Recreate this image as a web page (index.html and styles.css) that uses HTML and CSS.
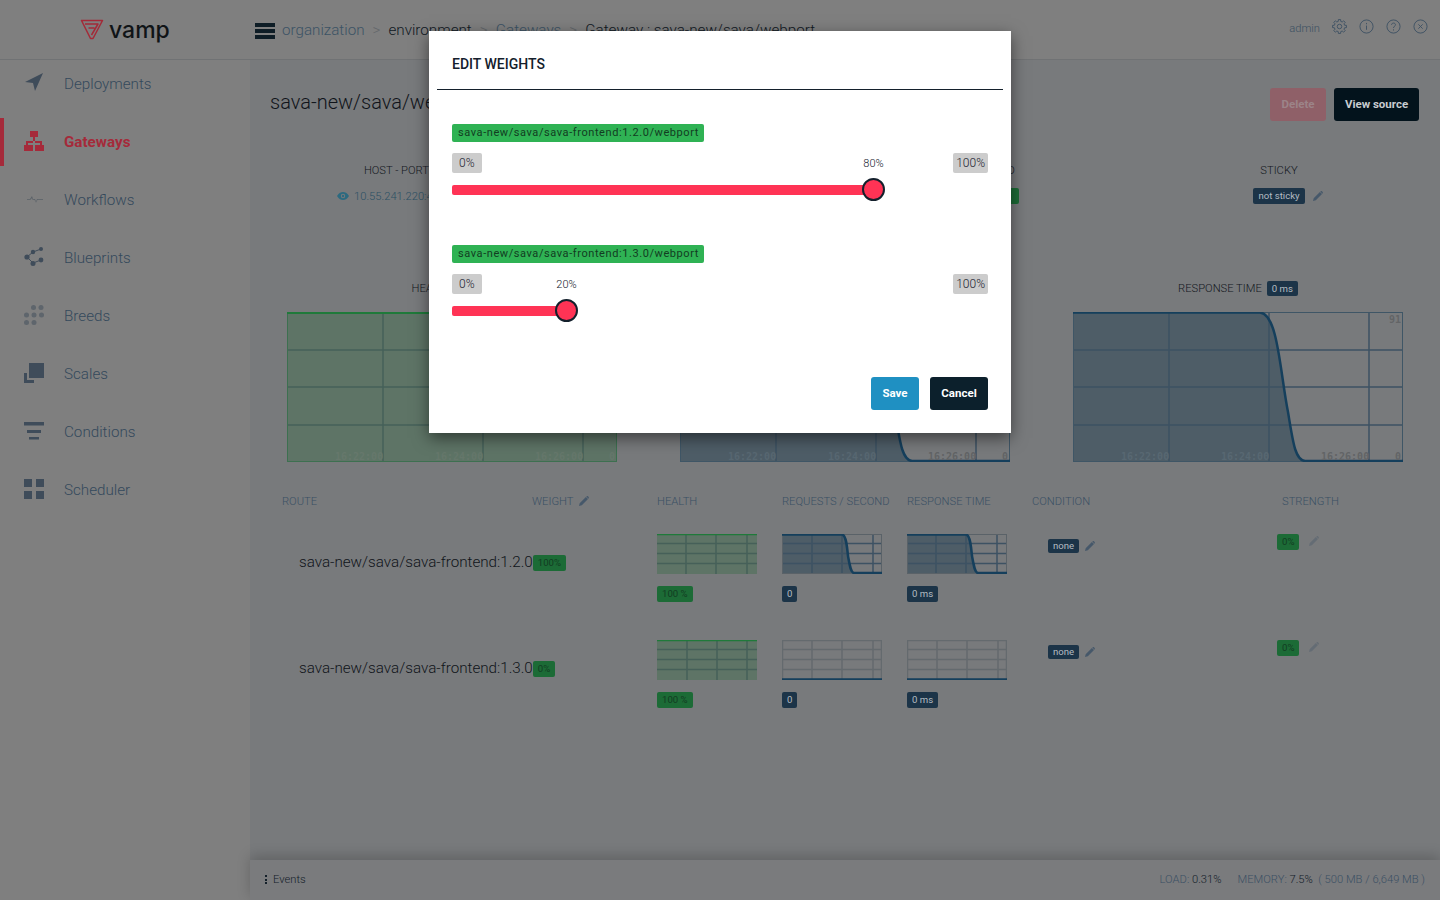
FILE: index.html
```html
<!DOCTYPE html>
<html lang="en">
<head>
  <meta charset="UTF-8" />
  <title>Vamp - Gateway</title>
  <link rel="stylesheet" href="styles.css">
</head>
<body>

<svg class="defs" width="0" height="0">
  <symbol id="pencil" viewBox="0 0 10 10">
    <path d="M0 10 L.7 7.2 L6.9 1 L9 3.1 L2.8 9.3 Z M7.5.4 C8 0 8.5 0 8.9.3 L9.7 1.1 C10 1.5 10 2 9.6 2.5 L9.4 2.7 L7.3.6 Z" />
  </symbol>
</svg>

<header class="topbar">
  <div class="logo">
    <svg width="24" height="21" viewBox="0 0 24 21" fill="none" stroke="#a32a38" stroke-width="1.5" stroke-linejoin="round">
      <path d="M1.5 1.5 L22.5 1.5 L13 19.5 L10.5 19.5 Z" />
      <path d="M5 5 L18 5 L11.5 16 M8.5 9 L14.5 9" />
    </svg>
    <span class="logo-text">vamp</span>
  </div>
  <div class="burger"><span></span><span></span><span></span></div>
  <nav class="crumbs">
    <span>organization</span><i>&gt;</i>
    <span class="crumb-dark">environment</span><i>&gt;</i>
    <span>Gateways</span><i>&gt;</i>
    <span class="crumb-dark">Gateway : sava-new/sava/webport</span>
  </nav>
  <div class="top-right">
    <span class="admin">admin</span>
    <svg class="top-icon" viewBox="0 0 16 16"><circle cx="8" cy="8" r="2.4" /><polygon points="13.43,6.65 15.41,6.83 15.41,9.17 13.43,9.35 12.8,10.88 14.07,12.41 12.41,14.07 10.88,12.8 9.35,13.43 9.17,15.41 6.83,15.41 6.65,13.43 5.12,12.8 3.59,14.07 1.93,12.41 3.2,10.88 2.57,9.35 .59,9.17 .59,6.83 2.57,6.65 3.2,5.12 1.93,3.59 3.59,1.93 5.12,3.2 6.65,2.57 6.83,.59 9.17,.59 9.35,2.57 10.88,3.2 12.41,1.93 14.07,3.59 12.8,5.12" /></svg>
    <svg class="top-icon" viewBox="0 0 16 16"><circle cx="8" cy="8" r="7" /><path d="M8 7v4.5M8 4.2v1.4" /></svg>
    <svg class="top-icon" viewBox="0 0 16 16"><circle cx="8" cy="8" r="7" /><path d="M5.9 6.2C6 3.6 10.2 3.8 10.1 6.2 10 7.8 8 7.8 8 9.6M8 11v1.3" /></svg>
    <svg class="top-icon" viewBox="0 0 16 16"><circle cx="8" cy="8" r="7" /><path d="M5.7 5.7l4.6 4.6M10.3 5.7l-4.6 4.6" /></svg>
  </div>
</header>

<div class="layout">
  <aside class="sidebar">
    <a class="nav-item">
      <svg class="nav-icon" viewBox="0 0 20 20"><path d="M1 9 L19 0 L11 18 L9 10 Z" /></svg>
      Deployments
    </a>
    <a class="nav-item active">
      <svg class="nav-icon" viewBox="0 0 20 20"><path d="M6 0h8v6h-3v4h7v4h2v6h-9v-6h5v-2h-5v-2h-2v2H4v2h5v6H0v-6h2v-4h7V6H6z" /></svg>
      Gateways
    </a>
    <a class="nav-item">
      <svg class="nav-icon faint" viewBox="0 0 20 20"><path d="M3 10h3l2-3 1 3h2l1 3 1-3h6v.7h-5.500l-1.500 3-1.500-3H8.500L8 9l-1.500 1.700H3z" /></svg>
      Workflows
    </a>
    <a class="nav-item">
      <svg class="nav-icon" viewBox="0 0 20 20"><path d="M3 10L9 5l8-3M3 10l6 6M17 13l-8 3" fill="none" stroke="#3f4c5a" /><circle cx="3" cy="10" r="2.600" /><circle cx="9" cy="5" r="2.200" /><circle cx="17" cy="2" r="2" /><circle cx="17" cy="13" r="2.400" /><circle cx="9" cy="16.500" r="2.500" /></svg>
      Blueprints
    </a>
    <a class="nav-item">
      <svg class="nav-icon dots" viewBox="0 0 20 20"><circle cx="9.500" cy="2.500" r="2.500" /><circle cx="17" cy="2.500" r="2.500" /><circle cx="2.500" cy="10" r="2.500" /><circle cx="10" cy="10" r="2.500" /><circle cx="17.500" cy="10" r="2.500" /><circle cx="2.500" cy="17.500" r="2.500" /><circle cx="10" cy="17.500" r="2.500" /></svg>
      Breeds
    </a>
    <a class="nav-item">
      <svg class="nav-icon" viewBox="0 0 20 20"><path d="M5 0h15v15H5z" /><path d="M0 10h3v7h7v3H0z" /></svg>
      Scales
    </a>
    <a class="nav-item">
      <svg class="nav-icon" viewBox="0 0 20 20"><path d="M0 1h20v3.500H0zM3 9h14v3H3zM5 16h10v2.500H5z" /></svg>
      Conditions
    </a>
    <a class="nav-item">
      <svg class="nav-icon" viewBox="0 0 20 20"><path d="M0 0h8v8H0zM12 0h8v8h-8zM0 12h8v8H0zM12 12h8v8h-8z" /></svg>
      Scheduler
    </a>
  </aside>

  <div class="content">
    <main class="main">
      <div class="toolbar">
        <h2 class="page-title">sava-new/sava/webport</h2>
        <div class="toolbar-btns">
          <button class="btn btn-delete">Delete</button>
          <button class="btn btn-dark">View source</button>
        </div>
      </div>

      <div class="stats">
        <div class="stat">
          <div class="stat-label">HOST - PORT/TYPE</div>
          <div class="stat-value host">
            <svg class="eye" viewBox="0 0 12 8"><path d="M0 4C2 .8 4 0 6 0s4 .8 6 4c-2 3.200-4 4-6 4S2 7.200 0 4z" /><circle cx="6" cy="4" r="2.200" fill="#787a7c" /><circle cx="6" cy="4" r="1.200" /></svg>
            10.55.241.220:40000 / http
          </div>
        </div>
        <div class="stat">
          <div class="stat-label">SERVICE</div>
        </div>
        <div class="stat">
          <div class="stat-label">DEPLOYED</div>
          <div class="stat-value"><span class="badge badge-green badge-wide">yes</span></div>
        </div>
        <div class="stat">
          <div class="stat-label">STICKY</div>
          <div class="stat-value">
            <span class="badge badge-navy">not sticky</span>
            <svg class="pencil pencil-hang"><use href="#pencil" /></svg>
          </div>
        </div>
      </div>

      <div class="charts">
        <div class="chart-box">
          <div class="chart-head">HEALTH <span class="badge badge-green">100 %</span></div>
          <svg class="chart" width="330" height="150" viewBox="0 0 330 150">
            <rect width="330" height="150" fill="#5e7466" />
            <path class="grid-green" d="M96 0v150M196 0v150M296 0v150M0 38h330M0 75h330M0 113h330" />
            <rect x=".5" y=".5" width="329" height="149" fill="none" stroke="#3d7050" />
            <path d="M0 1h330" stroke="#1f7a3a" stroke-width="2" />
            <text class="tick tick-fill" x="48" y="148">16:22:00</text>
            <text class="tick tick-fill" x="148" y="148">16:24:00</text>
            <text class="tick tick-fill" x="248" y="148">16:26:00</text>
            <text class="tick tick-fill" x="322" y="148">0</text>
          </svg>
        </div>
        <div class="chart-box">
          <div class="chart-head">REQUESTS / SECOND <span class="badge badge-navy">0</span></div>
          <svg class="chart" width="330" height="150" viewBox="0 0 330 150">
            <path class="area-blue" d="M0 .5H187C205 2 207 60 215 100 220 130 222 148 232 149.500H0Z" />
            <path class="grid-blue" d="M96 0v150M196 0v150M296 0v150M0 38h330M0 75h330M0 113h330" />
            <rect x=".5" y=".5" width="329" height="149" fill="none" stroke="#3f5666" />
            <path class="curve" d="M0 .5H187C205 2 207 60 215 100 220 130 222 148 232 149H330" />
            <text class="tick tick-blue" x="48" y="148">16:22:00</text>
            <text class="tick tick-blue" x="148" y="148">16:24:00</text>
            <text class="tick" x="248" y="148">16:26:00</text>
            <text class="tick" x="322" y="148">0</text>
          </svg>
        </div>
        <div class="chart-box">
          <div class="chart-head">RESPONSE TIME <span class="badge badge-navy">0 ms</span></div>
          <svg class="chart" width="330" height="150" viewBox="0 0 330 150">
            <path class="area-blue" d="M0 .5H187C205 2 207 60 215 100 220 130 222 148 232 149.500H0Z" />
            <path class="grid-blue" d="M96 0v150M196 0v150M296 0v150M0 38h330M0 75h330M0 113h330" />
            <rect x=".5" y=".5" width="329" height="149" fill="none" stroke="#3f5666" />
            <path class="curve" d="M0 .5H187C205 2 207 60 215 100 220 130 222 148 232 149H330" />
            <text class="tick" x="316" y="11">91</text>
            <text class="tick tick-blue" x="48" y="148">16:22:00</text>
            <text class="tick tick-blue" x="148" y="148">16:24:00</text>
            <text class="tick" x="248" y="148">16:26:00</text>
            <text class="tick" x="322" y="148">0</text>
          </svg>
        </div>
      </div>

      <div class="routes">
        <div class="route-grid route-head">
          <div>ROUTE</div>
          <div>WEIGHT <svg class="pencil"><use href="#pencil" /></svg></div>
          <div>HEALTH</div>
          <div>REQUESTS / SECOND</div>
          <div>RESPONSE TIME</div>
          <div>CONDITION</div>
          <div>STRENGTH</div>
        </div>

        <div class="route-grid route-row">
          <div class="route-name"><span>sava-new/sava/sava-frontend:1.2.0</span><span class="badge badge-green">100%</span></div>
          <div class="mini">
            <svg width="100" height="40" viewBox="0 0 100 40">
              <rect width="100" height="40" fill="#5e7466" />
              <path class="grid-green" d="M29 0v40M59 0v40M90 0v40M0 9.500h100M0 19.500h100M0 29.500h100" />
              <path d="M0 .5h100" stroke="#1f7a3a" stroke-width="1.500" />
            </svg>
            <span class="badge badge-green">100 %</span>
          </div>
          <div class="mini">
            <svg width="100" height="40" viewBox="0 0 100 40">
              <path class="area-blue" d="M0 .5H60C64 1 65 12 66 22 68 33 69 39 72 39.500H0Z" />
              <path class="grid-blue" d="M30 0v40M60 0v40M91 0v40M0 9.500h100M0 19.500h100M0 29.500h100" />
              <rect x=".5" y=".5" width="99" height="39" fill="none" stroke="#5a6268" />
              <path class="curve" d="M0 .5H60C64 1 65 12 66 22 68 33 69 39 72 39H100" />
            </svg>
            <span class="badge badge-navy">0</span>
          </div>
          <div class="mini">
            <svg width="100" height="40" viewBox="0 0 100 40">
              <path class="area-blue" d="M0 .5H59C63 1 64 12 65 22 67 33 68 39 71 39.500H0Z" />
              <path class="grid-blue" d="M29 0v40M59 0v40M90 0v40M0 9.500h100M0 19.500h100M0 29.500h100" />
              <rect x=".5" y=".5" width="99" height="39" fill="none" stroke="#5a6268" />
              <path class="curve" d="M0 .5H59C63 1 64 12 65 22 67 33 68 39 71 39H100" />
            </svg>
            <span class="badge badge-navy">0 ms</span>
          </div>
          <div class="condition"><span class="badge badge-navy badge-small">none</span><svg class="pencil"><use href="#pencil" /></svg></div>
          <div class="strength"><span class="badge badge-green">0%</span><svg class="pencil pencil-faint"><use href="#pencil" /></svg></div>
        </div>

        <div class="route-grid route-row">
          <div class="route-name"><span>sava-new/sava/sava-frontend:1.3.0</span><span class="badge badge-green">0%</span></div>
          <div class="mini">
            <svg width="100" height="40" viewBox="0 0 100 40">
              <rect width="100" height="40" fill="#5e7466" />
              <path class="grid-green" d="M30 0v40M60 0v40M90 0v40M0 9.500h100M0 19.500h100M0 29.500h100" />
              <path d="M0 .5h100" stroke="#1f7a3a" stroke-width="1.500" />
            </svg>
            <span class="badge badge-green">100 %</span>
          </div>
          <div class="mini">
            <svg width="100" height="40" viewBox="0 0 100 40">
              <path class="grid-gray" d="M.5 0v40M30 0v40M60 0v40M91 0v40M99.500 0v40M0 .5h100M0 9.500h100M0 19.500h100M0 29.500h100" />
              <path class="curve" d="M0 39.500H100" />
            </svg>
            <span class="badge badge-navy">0</span>
          </div>
          <div class="mini">
            <svg width="100" height="40" viewBox="0 0 100 40">
              <path class="grid-gray" d="M.5 0v40M30 0v40M60 0v40M91 0v40M99.500 0v40M0 .5h100M0 9.500h100M0 19.500h100M0 29.500h100" />
              <path class="curve" d="M0 39.500H100" />
            </svg>
            <span class="badge badge-navy">0 ms</span>
          </div>
          <div class="condition"><span class="badge badge-navy badge-small">none</span><svg class="pencil"><use href="#pencil" /></svg></div>
          <div class="strength"><span class="badge badge-green">0%</span><svg class="pencil pencil-faint"><use href="#pencil" /></svg></div>
        </div>
      </div>
    </main>

    <footer class="statusbar">
      <div class="events"><span class="kebab"></span>Events</div>
      <div class="usage">
        <span>LOAD: <b>0.31%</b></span>
        <span>MEMORY: <b>7.5%</b> &nbsp;( 500 MB / 6,649 MB )</span>
      </div>
    </footer>
  </div>
</div>

<div class="modal">
  <div class="modal-title">EDIT WEIGHTS</div>
  <div class="modal-body">
    <div class="weight">
      <span class="route-tag">sava-new/sava/sava-frontend:1.2.0/webport</span>
      <div class="scale"><span>0%</span><span>100%</span></div>
      <div class="track" style="width: 422px">
        <span class="thumb-label">80%</span>
        <span class="thumb"></span>
      </div>
    </div>
    <div class="weight">
      <span class="route-tag">sava-new/sava/sava-frontend:1.3.0/webport</span>
      <div class="scale"><span>0%</span><span>100%</span></div>
      <div class="track" style="width: 115px">
        <span class="thumb-label">20%</span>
        <span class="thumb"></span>
      </div>
    </div>
    <div class="modal-btns">
      <button class="btn btn-save">Save</button>
      <button class="btn btn-cancel">Cancel</button>
    </div>
  </div>
</div>

</body>
</html>
```

FILE: styles.css
```css
* {
  box-sizing: border-box;
}
html, body {
  margin: 0;
  height: 900px;
  overflow: hidden;
}
body {
  font-family: Roboto, "Liberation Sans", sans-serif;
  font-weight: 300;
  background: #7f7f7f;
  color: #1c2630;
  position: relative;
}
.defs {
  position: absolute;
}

/* top bar */
.topbar {
  display: flex;
  align-items: center;
  height: 60px;
  border-bottom: 1px solid #707274;
}
.logo {
  width: 255px;
  flex: none;
  display: flex;
  align-items: center;
  padding-left: 80px;
  gap: 5px;
}
.logo-text {
  font-family: Inter, sans-serif;
  font-size: 23px;
  font-weight: 500;
  color: #101417;
  line-height: 24px;
}
.burger {
  width: 20px;
  display: flex;
  flex-direction: column;
  gap: 2px;
  flex: none;
  margin-top: 2px;
}
.burger span {
  height: 4px;
  background: #0e1d26;
}
.crumbs {
  display: flex;
  align-items: center;
  margin-left: 7px;
  font-size: 15.2px;
  color: #3c5365;
  white-space: nowrap;
}
.crumbs i {
  font-style: normal;
  margin: 0 8px 0 8px;
  color: #62666a;
}
.crumb-dark {
  color: #10181f;
}
.top-right {
  margin-left: auto;
  display: flex;
  align-items: center;
  padding-right: 12px;
  gap: 12px;
  margin-top: -6px;
}
.admin {
  font-size: 11.2px;
  color: #3c5062;
  margin-top: 4px;
}
.top-icon {
  width: 15px;
  height: 15px;
  fill: none;
  stroke: #3f5264;
  stroke-width: 1;
  stroke-linejoin: round;
}

/* layout */
.layout {
  display: flex;
  height: 840px;
}
.sidebar {
  width: 250px;
  flex: none;
  display: flex;
  flex-direction: column;
  gap: 10px;
}
.nav-item {
  display: flex;
  align-items: center;
  height: 48px;
  padding-left: 24px;
  font-size: 15.2px;
  color: #34495c;
}
.nav-item.active {
  color: #a52a3a;
  font-weight: 700;
  box-shadow: inset 4px 0 #a52a3a;
}
.nav-icon {
  width: 20px;
  height: 20px;
  margin: -2px 20px 0 0;
  fill: #3f4c5a;
  flex: none;
}
.active .nav-icon {
  fill: #a52a3a;
}
.nav-icon.faint {
  fill: #5a6168;
}
.nav-icon.dots {
  fill: #5e656c;
}

.content {
  flex: 1;
  display: flex;
  flex-direction: column;
  background: #787a7c;
}
.main {
  flex: 1;
  padding: 28px 21px 0 20px;
}
.toolbar {
  display: flex;
  justify-content: space-between;
  align-items: center;
  height: 33px;
}
.page-title {
  margin: 0;
  font-size: 20px;
  font-weight: 300;
  color: #10141a;
  position: relative;
  top: -3px;
}
.toolbar-btns {
  display: flex;
  gap: 8px;
}
.btn {
  height: 33px;
  border: none;
  border-radius: 3px;
  font-family: Roboto, sans-serif;
  font-size: 11.5px;
  font-weight: 700;
  padding: 0 0 2px;
}
.btn-delete {
  width: 56px;
  background: #8f6068;
  color: #9c8488;
}
.btn-dark {
  width: 85px;
  background: #03131c;
  color: #c8cccf;
}

/* stat row */
.stats {
  display: grid;
  grid-template-columns: 284px 292px 284px 298px;
  margin-top: 42px;
  text-align: center;
  font-size: 11.2px;
  margin-right: -9px;
}
.stat-label {
  line-height: 14px;
  padding-top: 1px;
  height: 15px;
  color: #14181e;
}
.stat-value {
  margin-top: 10px;
  height: 16px;
  display: flex;
  justify-content: center;
  align-items: center;
  white-space: nowrap;
}
.host {
  color: #2c5064;
}
.eye {
  width: 12px;
  height: 8px;
  fill: #2c6a80;
  margin-right: 5px;
}
.badge {
  display: inline-block;
  height: 16px;
  line-height: 16px;
  padding: 0 5px;
  border-radius: 2px;
  font-size: 9.6px;
  font-weight: 400;
  white-space: nowrap;
}
.badge-green {
  background: #1c6b36;
  color: #123c22;
}
.badge-navy {
  background: #1c3448;
  color: #b4bcc2;
}
.badge-wide {
  width: 62px;
}
.badge-small {
  height: 14px;
  line-height: 14px;
}
.pencil {
  width: 10px;
  height: 10px;
  fill: #46586a;
  margin-left: 3px;
}
.pencil-hang {
  margin-left: 8px;
  margin-right: -18px;
}
.pencil-faint {
  fill: #646c74;
}

/* charts */
.charts {
  display: flex;
  justify-content: space-between;
  margin-top: 77px;
  padding: 0 16px 0 17px;
}
.chart-box {
  width: 330px;
}
.chart-head {
  height: 15px;
  margin-bottom: 16px;
  display: flex;
  justify-content: center;
  align-items: center;
  gap: 5px;
  font-size: 11.2px;
  color: #14181e;
}
.chart-head .badge {
  height: 15px;
  line-height: 15px;
}
.chart {
  display: block;
  background: #787a7c;
}
.area-blue {
  fill: #4e5d67;
}
.grid-green, .grid-blue, .grid-gray {
  fill: none;
  stroke-width: 1.5;
}
.grid-green {
  stroke: #466059;
}
.grid-blue {
  stroke: #3d5263;
}
.grid-gray {
  stroke: #646a6e;
}
.curve {
  fill: none;
  stroke: #153f5c;
  stroke-width: 2.5;
}
.tick {
  font-family: "DejaVu Sans Mono", monospace;
  font-size: 10px;
  font-weight: 700;
  fill: #626466;
}
.tick-fill {
  fill: #66786c;
}
.tick-blue {
  fill: #586872;
}

/* route table */
.routes {
  margin-top: 34px;
  padding-left: 12px;
}
.route-grid {
  display: grid;
  grid-template-columns: 250px 125px 125px 125px 125px 250px 125px;
}
.route-head {
  height: 12px;
  font-size: 11.2px;
  line-height: 12px;
  color: #3a5064;
  margin-bottom: 26px;
  white-space: nowrap;
}
.route-head .pencil {
  vertical-align: -1px;
}
.route-row {
  height: 106px;
}
.route-name {
  grid-column: 1 / 3;
  padding: 19px 0 0 17px;
  display: flex;
  font-size: 15.2px;
  line-height: 19px;
  color: #10141a;
  white-space: nowrap;
}
.route-name .badge {
  margin-top: 2px;
}
.mini svg {
  display: block;
}
.mini .badge {
  margin-top: 12px;
}
.condition {
  padding: 5px 0 0 16px;
  display: flex;
  align-items: flex-start;
  gap: 3px;
}
.condition .pencil {
  margin-top: 2px;
}
.strength {
  margin-left: -5px;
  display: flex;
  align-items: flex-start;
  gap: 7px;
}
.strength .pencil {
  margin-top: 2px;
}

/* status bar */
.statusbar {
  height: 40px;
  display: flex;
  justify-content: space-between;
  align-items: center;
  padding: 0 15px 2px;
  font-size: 11.2px;
  color: #3a5064;
  background: #7a7b7d;
  box-shadow: 0 -4px 14px rgba(0, 0, 0, .2);
  position: relative;
}
.events {
  display: flex;
  align-items: center;
  color: #14202a;
}
.kebab {
  width: 2px;
  height: 9px;
  margin-right: 6px;
  background: repeating-linear-gradient(#14202a 0 2px, transparent 2px 3.5px);
}
.usage {
  display: flex;
  gap: 16px;
}
.usage b {
  font-weight: 300;
  color: #14202a;
}

/* modal */
.modal {
  position: absolute;
  left: 429px;
  top: 31px;
  width: 582px;
  height: 402px;
  background: #fff;
  box-shadow: 0 5px 15px rgba(0, 0, 0, .5);
  color: #14202c;
}
.modal-title {
  margin: 0 8px;
  padding: 25px 15px 17px;
  height: 59px;
  border-bottom: 1px solid #14202c;
  font-size: 14px;
  line-height: 16px;
  font-weight: 500;
}
.modal-body {
  padding: 34px 23px 0;
}
.weight {
  height: 121px;
}
.route-tag {
  display: block;
  width: 252px;
  height: 18px;
  line-height: 18px;
  padding-left: 6px;
  border-radius: 2px;
  background: #2fb254;
  font-size: 11px;
  font-weight: 400;
  letter-spacing: .58px;
  white-space: nowrap;
  color: #123c22;
}
.scale {
  display: flex;
  justify-content: space-between;
  margin-top: 11px;
}
.scale span {
  height: 20px;
  line-height: 20px;
  padding: 0 7px;
  background: #ccc;
  border-radius: 2px;
  font-size: 12px;
  color: #1c2230;
}
.scale span:last-child {
  padding: 0 3px;
}
.track {
  position: relative;
  height: 10px;
  margin-top: 12px;
  background: #ff3355;
  border-radius: 2px 0 0 2px;
}
.thumb {
  position: absolute;
  right: -11px;
  top: -7px;
  width: 23px;
  height: 23px;
  border-radius: 50%;
  background: #ff3355;
  border: 2px solid #14202c;
}
.thumb-label {
  position: absolute;
  right: -11px;
  width: 23px;
  top: -28px;
  text-align: center;
  font-size: 11px;
  line-height: 14px;
  color: #14182a;
  white-space: nowrap;
}
.modal-btns {
  display: flex;
  justify-content: flex-end;
  gap: 11px;
  margin-top: 11px;
}
.btn-save {
  width: 48px;
  background: #1f90c2;
  color: #fff;
}
.btn-cancel {
  width: 58px;
  background: #0c202c;
  color: #fff;
}
```
